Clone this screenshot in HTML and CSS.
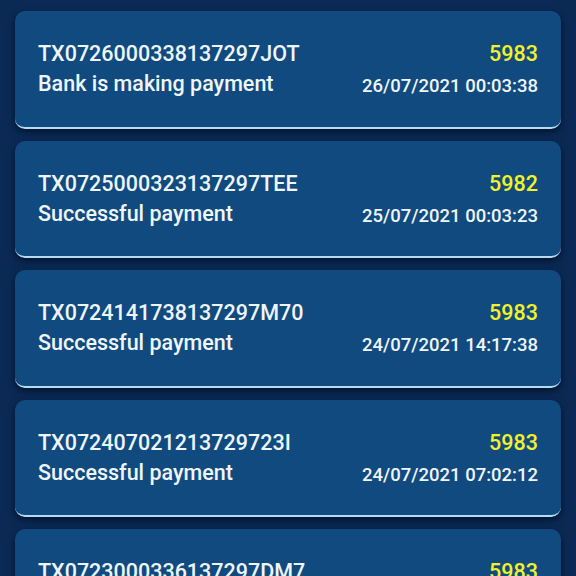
FILE: index.html
```html
<!DOCTYPE html>
<html lang="en">
<head>
<meta charset="UTF-8">
<meta name="viewport" content="width=device-width, initial-scale=1.0">
<title>Transactions</title>
<link rel="stylesheet" href="styles.css">
</head>
<body>
<div class="list">
  <div class="card">
    <div class="info">
      <div class="txid">TX0726000338137297JOT</div>
      <div class="status">Bank is making payment</div>
    </div>
    <div class="meta">
      <div class="amount">5983</div>
      <div class="date">26/07/2021 00:03:38</div>
    </div>
  </div>
  <div class="card">
    <div class="info">
      <div class="txid">TX0725000323137297TEE</div>
      <div class="status">Successful payment</div>
    </div>
    <div class="meta">
      <div class="amount">5982</div>
      <div class="date">25/07/2021 00:03:23</div>
    </div>
  </div>
  <div class="card">
    <div class="info">
      <div class="txid">TX0724141738137297M70</div>
      <div class="status">Successful payment</div>
    </div>
    <div class="meta">
      <div class="amount">5983</div>
      <div class="date">24/07/2021 14:17:38</div>
    </div>
  </div>
  <div class="card">
    <div class="info">
      <div class="txid">TX072407021213729723I</div>
      <div class="status">Successful payment</div>
    </div>
    <div class="meta">
      <div class="amount">5983</div>
      <div class="date">24/07/2021 07:02:12</div>
    </div>
  </div>
  <div class="card">
    <div class="info">
      <div class="txid">TX0723000336137297DM7</div>
      <div class="status">Successful payment</div>
    </div>
    <div class="meta">
      <div class="amount">5983</div>
      <div class="date">23/07/2021 00:03:36</div>
    </div>
  </div>
</div>
</body>
</html>
```

FILE: styles.css
```css
body {
  margin: 0;
  height: 576px;
  background-color: #0a2a55;
  font-family: Roboto, "Liberation Sans", sans-serif;
  color: #eef6fc;
  overflow: hidden;
}
.list {
  display: flex;
  flex-direction: column;
  gap: 12px;
  padding: 11px 15px;
}
.card {
  display: flex;
  justify-content: space-between;
  align-items: flex-start;
  flex-shrink: 0;
  box-sizing: border-box;
  height: 117.5px;
  padding: 28px 23px 0;
  background-color: #114a7e;
  border-bottom: 2px solid #b3dbf4;
  border-radius: 10px;
  box-shadow: 0 3px 7px rgba(0, 8, 28, 0.7);
}
.txid, .status {
  font-size: 21.5px;
  font-weight: 500;
  line-height: 30px;
}
.meta {
  text-align: right;
}
.amount {
  color: #f2f22a;
  font-size: 21.5px;
  font-weight: 500;
  line-height: 30px;
}
.date {
  font-size: 18.5px;
  font-weight: 500;
  line-height: 35px;
}
```
